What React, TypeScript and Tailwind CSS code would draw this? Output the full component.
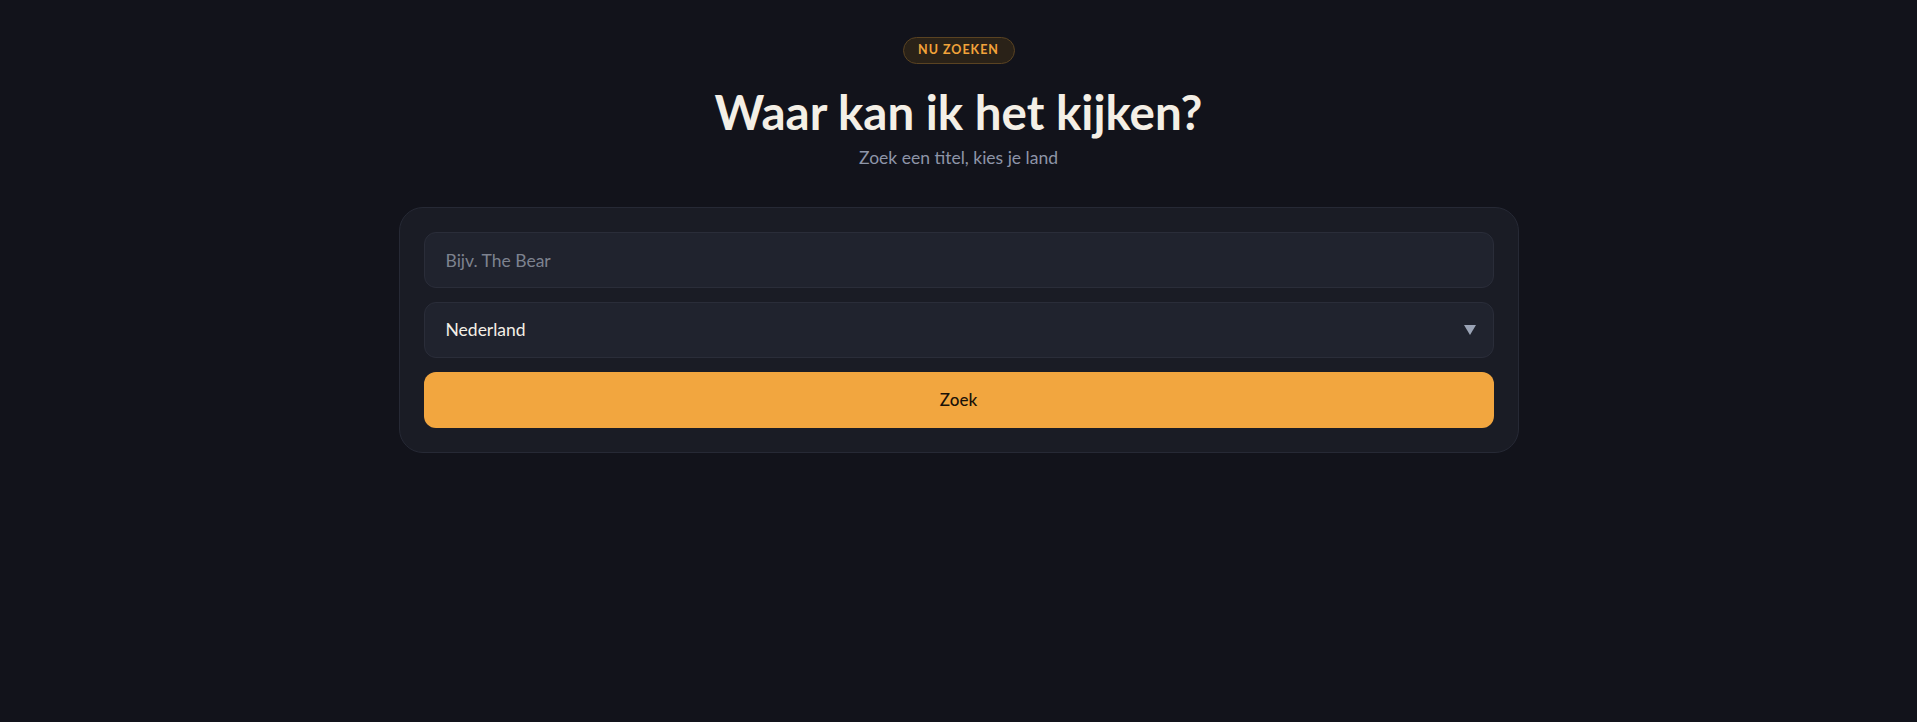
import { useState } from "react";

const countries = ["Nederland", "België", "Duitsland", "Verenigd Koninkrijk", "Verenigde Staten"];

export default function App() {
  const [query, setQuery] = useState("");
  const [country, setCountry] = useState("Nederland");

  return (
    <div className="min-h-screen bg-[#12131b] font-['Lato','Open_Sans',sans-serif] text-[#f4efe6]">
      <main className="mx-auto flex max-w-[1120px] flex-col items-center pt-[37px]">
        {/* Badge */}
        <span className="flex h-[27px] w-[112px] items-center justify-center rounded-full border border-[#5a4322] bg-[#2a2218] text-[12.5px] font-bold tracking-[0.08em] text-[#f2a33a]">
          NU ZOEKEN
        </span>

        <h1 className="mt-[19px] text-[47.5px] leading-[1.2] font-bold">Waar kan ik het kijken?</h1>
        <p className="mt-1.5 text-[17.5px] leading-6 text-[#8e95a8]">Zoek een titel, kies je land</p>

        {/* Search card */}
        <form
          className="mt-[37px] flex w-full flex-col gap-3.5 rounded-3xl border border-[#262935] bg-[#1a1c25] p-6"
          onSubmit={(e) => e.preventDefault()}
        >
          <input
            value={query}
            onChange={(e) => setQuery(e.target.value)}
            placeholder="Bijv. The Bear"
            className="h-14 rounded-xl border border-[#2a2d39] bg-[#20232e] px-[21px] text-[17.5px] text-[#f4efe6] outline-none placeholder:text-[#7d828f]"
          />
          <div className="relative">
            <select
              value={country}
              onChange={(e) => setCountry(e.target.value)}
              className="h-14 w-full appearance-none rounded-xl border border-[#2a2d39] bg-[#20232e] px-[21px] text-[17.5px] text-[#f4efe6] outline-none"
            >
              {countries.map((c) => (
                <option key={c}>{c}</option>
              ))}
            </select>
            <svg
              className="pointer-events-none absolute top-1/2 right-[18px] -translate-y-1/2"
              width="12"
              height="10"
              viewBox="0 0 12 10"
            >
              <path d="M0 0h12L6 10z" fill="#9aa3b5" />
            </svg>
          </div>
          <button
            type="submit"
            className="h-14 rounded-xl bg-[#f2a63f] text-[17px] font-medium text-[#1a1208]"
          >
            Zoek
          </button>
        </form>
      </main>
    </div>
  );
}
